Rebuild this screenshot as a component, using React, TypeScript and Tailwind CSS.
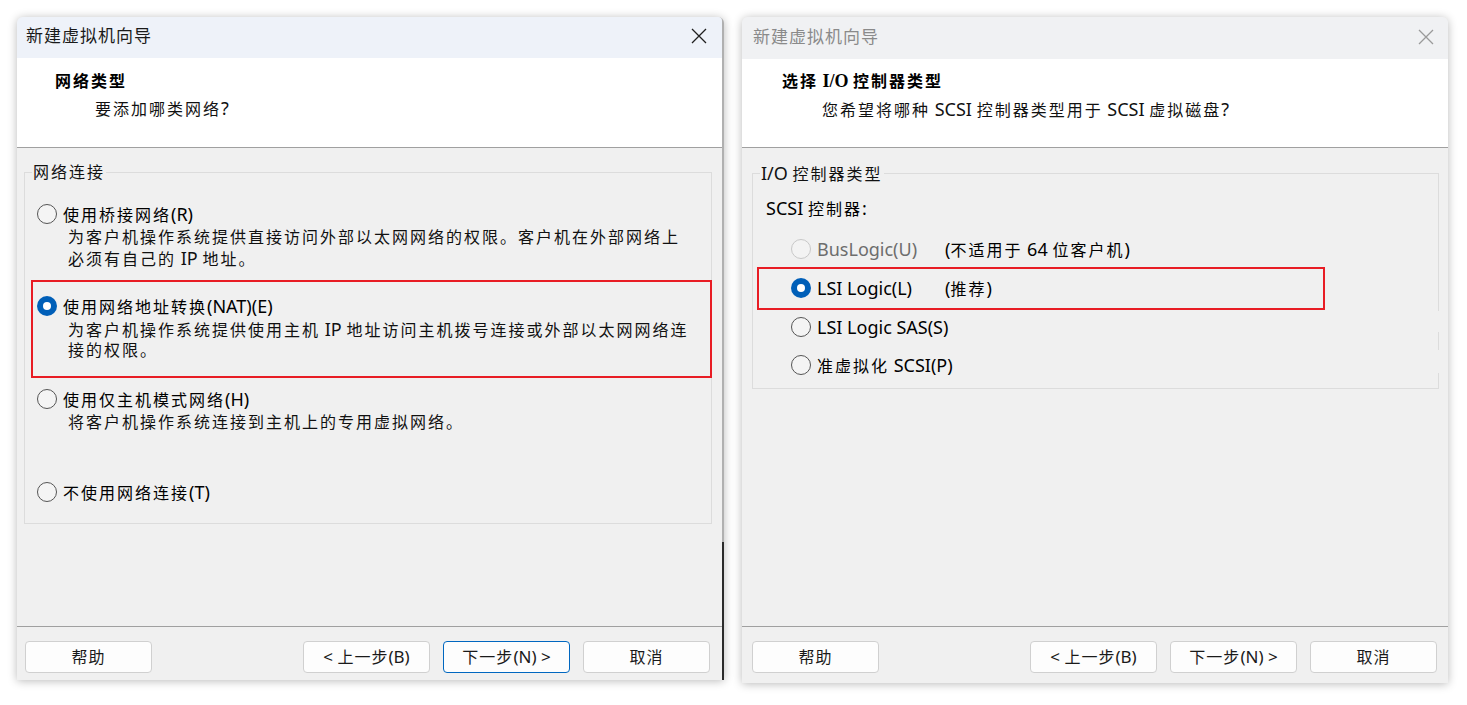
import React from "react";

const CJK_SPLIT = /([\u3000-\u303f\u4e00-\u9fff\uff00-\uffef]+)/;
const CJK_TEST = /[\u3000-\u303f\u4e00-\u9fff\uff00-\uffef]/;

function T({ s, c = "tracking-[2px]", l = "text-[18px]" }: { s: string; c?: string; l?: string }) {
  const parts = s.split(CJK_SPLIT).filter((p) => p !== "");
  return (
    <>
      {parts.map((p, i) =>
        CJK_TEST.test(p) ? (
          <span key={i} className={c}>
            {p}
          </span>
        ) : (
          <span key={i} className={l}>
            {p}
          </span>
        )
      )}
    </>
  );
}

function Radio({ checked, disabled }: { checked?: boolean; disabled?: boolean }) {
  if (checked)
    return (
      <span className="w-[20px] h-[20px] shrink-0 rounded-full bg-[#005fb8] flex items-center justify-center">
        <span className="w-[8px] h-[8px] rounded-full bg-white" />
      </span>
    );
  return (
    <span
      className={
        disabled
          ? "w-[20px] h-[20px] shrink-0 rounded-full border border-[#c8c8c8] bg-[#f3f3f3]"
          : "w-[20px] h-[20px] shrink-0 rounded-full border border-[#555555] bg-[#f4f4f4]"
      }
    />
  );
}

function CloseX({ color }: { color: string }) {
  return (
    <svg width="16" height="16" viewBox="0 0 16 16" className="shrink-0">
      <path d="M1 1 L15 15 M15 1 L1 15" stroke={color} strokeWidth="1.3" fill="none" />
    </svg>
  );
}

function Btn({ label, primary }: { label: string; primary?: boolean }) {
  return (
    <div
      className={
        primary
          ? "w-[127px] h-[32px] shrink-0 rounded-[4px] bg-[#fdfdfd] border border-[#0067c0] flex items-center justify-center text-[16px] text-[#1a1a1a]"
          : "w-[127px] h-[32px] shrink-0 rounded-[4px] bg-[#fdfdfd] border border-[#d0d0d0] flex items-center justify-center text-[16px] text-[#1a1a1a]"
      }
    >
      <span className="block h-[22px] leading-[22px] whitespace-pre">
        <T s={label} c="tracking-[1px]" l="text-[17px]" />
      </span>
    </div>
  );
}

function Option({ label, checked, desc }: { label: string; checked?: boolean; desc?: string[] }) {
  return (
    <div>
      <div className="flex items-center h-[22px]">
        <Radio checked={checked} />
        <span className="ml-[6px] h-[22px] overflow-visible leading-[22px] whitespace-nowrap text-black">
          <T s={label} />
        </span>
      </div>
      {desc && (
        <div className="pl-[31px] mt-[2px] whitespace-nowrap text-[#111]">
          {desc.map((d, i) => (
            <div key={i} className="h-[21px] leading-[21px]">
              <T s={d} />
            </div>
          ))}
        </div>
      )}
    </div>
  );
}

function ScsiRow({ label, note, checked, disabled }: { label: string; note?: string; checked?: boolean; disabled?: boolean }) {
  return (
    <div className="flex items-center h-[22px]">
      <Radio checked={checked} disabled={disabled} />
      <span
        className={
          disabled
            ? "ml-[6px] w-[128px] shrink-0 leading-[22px] whitespace-nowrap text-[#6d6d6d]"
            : "ml-[6px] w-[128px] shrink-0 leading-[22px] whitespace-nowrap text-black"
        }
      >
        <T s={label} />
      </span>
      {note && (
        <span className="leading-[22px] whitespace-nowrap text-black">
          <T s={note} />
        </span>
      )}
    </div>
  );
}

export default function App() {
  return (
    <div className="w-[1467px] h-[705px] bg-white flex items-start pt-[17px] pl-[17px] overflow-hidden font-['Noto_Sans','Noto_Sans_CJK_SC',sans-serif] text-[16px] text-[#111]">
      {/* Left dialog */}
      <div className="relative w-[707px] h-[663px] shrink-0 flex flex-col rounded-t-[6px] bg-[#f0f0f0] border-r-2 border-[#b0b0b0] shadow-[0_1px_10px_rgba(0,0,0,0.28)]">
        <div className="h-[41px] shrink-0 bg-[#eef2f9] rounded-tl-[6px] rounded-tr-[4px] flex items-center justify-between pl-[9px] pr-[15px] pb-[3px]">
          <span className="text-[17px] leading-[22px] text-[#1a1a1a] whitespace-nowrap">
            <T s="新建虚拟机向导" c="tracking-[1px]" />
          </span>
          <CloseX color="#1f1f1f" />
        </div>
        <div className="h-[90px] shrink-0 bg-white border-b border-[#a0a0a0] pt-[12px]">
          <div className="pl-[38px] h-[22px] leading-[22px] font-bold text-black whitespace-nowrap">
            <T s="网络类型" />
          </div>
          <div className="pl-[78px] mt-[5px] h-[22px] leading-[22px] text-[#111] whitespace-nowrap">
            <T s="要添加哪类网络?" />
          </div>
        </div>
        <div className="flex-1 min-h-0">
          <div className="relative mt-[24px] ml-[7px] w-[688px] border border-[#dcdcdc] pt-[30px] pb-[20px]">
            <span className="absolute left-[7px] top-[-12px] px-[1px] bg-[#f0f0f0] leading-[22px] whitespace-nowrap text-[#111]">
              <T s="网络连接" />
            </span>
            <div className="ml-[12px]">
              <Option
                label="使用桥接网络(R)"
                desc={["为客户机操作系统提供直接访问外部以太网网络的权限。客户机在外部网络上", "必须有自己的 IP 地址。"]}
              />
            </div>
            <div className="mt-[11px] ml-[6px] w-[681px] border-2 border-[#e81c24] pl-[4px] pt-[13px] pb-[15px]">
              <Option
                label="使用网络地址转换(NAT)(E)"
                checked
                desc={["为客户机操作系统提供使用主机 IP 地址访问主机拨号连接或外部以太网网络连", "接的权限。"]}
              />
            </div>
            <div className="mt-[10px] ml-[12px]">
              <Option label="使用仅主机模式网络(H)" desc={["将客户机操作系统连接到主机上的专用虚拟网络。"]} />
            </div>
            <div className="mt-[48px] ml-[12px]">
              <Option label="不使用网络连接(T)" />
            </div>
          </div>
        </div>
        <div className="h-[54px] shrink-0 border-t border-[#a0a0a0] flex items-start pt-[14px] pl-[8px] pr-[12px]">
          <Btn label="帮助" />
          <div className="flex-1" />
          <div className="flex gap-[13px]">
            <Btn label="< 上一步(B)" />
            <Btn label="下一步(N) >" primary />
            <Btn label="取消" />
          </div>
        </div>
        <div className="absolute right-[-2px] top-[525px] w-[2px] h-[138px] bg-[#2b2b2b]" />
      </div>

      {/* Right dialog */}
      <div className="relative ml-[18px] w-[706px] h-[666px] shrink-0 flex flex-col rounded-t-[6px] bg-[#f0f0f0] shadow-[0_1px_10px_rgba(0,0,0,0.28)]">
        <div className="h-[42px] shrink-0 bg-[#f0f1f3] rounded-t-[6px] flex items-center justify-between pl-[11px] pr-[14px] pb-[3px]">
          <span className="text-[17px] leading-[22px] text-[#8a8a8a] whitespace-nowrap">
            <T s="新建虚拟机向导" c="tracking-[1px]" />
          </span>
          <CloseX color="#9a9a9a" />
        </div>
        <div className="h-[89px] shrink-0 bg-white border-b border-[#a0a0a0] pt-[11px]">
          <div className="pl-[40px] h-[22px] leading-[22px] font-bold text-black whitespace-nowrap">
            <T s="选择 I/O 控制器类型" l="text-[18px] font-['Liberation_Serif']" />
          </div>
          <div className="pl-[80px] mt-[6px] h-[22px] leading-[22px] text-[#111] whitespace-nowrap">
            <T s="您希望将哪种 SCSI 控制器类型用于 SCSI 虚拟磁盘?" />
          </div>
        </div>
        <div className="flex-1 min-h-0">
          <div className="relative mt-[25px] ml-[10px] w-[687px] border border-[#dcdcdc] pt-[23px] pb-[12px]">
            <span className="absolute left-[7px] top-[-12px] px-[1px] bg-[#f0f0f0] leading-[22px] whitespace-nowrap text-[#111]">
              <T s="I/O 控制器类型" />
            </span>
            <div className="ml-[13px] h-[22px] leading-[22px] whitespace-nowrap text-black">
              <T s="SCSI 控制器:" />
            </div>
            <div className="mt-[19px] ml-[38px]">
              <ScsiRow label="BusLogic(U)" note="(不适用于 64 位客户机)" disabled />
            </div>
            <div className="mt-[7px] ml-[4px] w-[568px] border-2 border-[#e81c24] pl-[32px] pt-[8px] pb-[9px]">
              <ScsiRow label="LSI Logic(L)" note="(推荐)" checked />
            </div>
            <div className="mt-[6px] ml-[38px]">
              <ScsiRow label="LSI Logic SAS(S)" />
            </div>
            <div className="mt-[16px] ml-[38px]">
              <ScsiRow label="准虚拟化 SCSI(P)" />
            </div>
            <div className="absolute right-[-1px] top-[137px] w-[1px] h-[21px] bg-[#f0f0f0]" />
            <div className="absolute right-[-1px] top-[176px] w-[1px] h-[23px] bg-[#f0f0f0]" />
          </div>
        </div>
        <div className="h-[57px] shrink-0 border-t border-[#a0a0a0] flex items-start pt-[14px] pl-[10px] pr-[11px]">
          <Btn label="帮助" />
          <div className="flex-1" />
          <div className="flex gap-[13px]">
            <Btn label="< 上一步(B)" />
            <Btn label="下一步(N) >" />
            <Btn label="取消" />
          </div>
        </div>
      </div>
    </div>
  );
}
